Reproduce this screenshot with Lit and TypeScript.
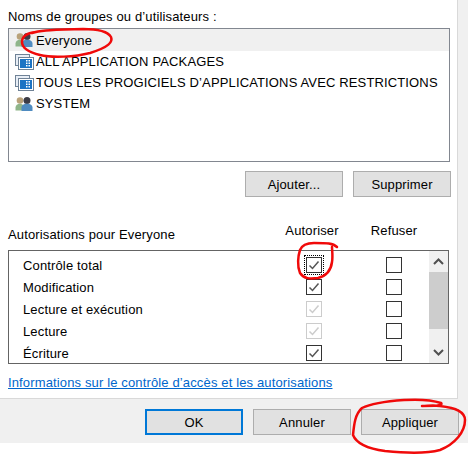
import { LitElement, html, css, svg } from "lit";
import { customElement } from "lit/decorators.js";

const userIcon = html`<svg class="ico" width="19" height="16" viewBox="0 0 19 16">
  <circle cx="5" cy="4.500" r="3.300" fill="#b9a27a"/><path d="M0.500 14.500v-3c0-2.500 2-3.800 4.500-3.800 2 0 3 1 4 2v4.800z" fill="#8fb58a"/>
  <circle cx="12" cy="4.500" r="3.500" fill="#3c3c46"/><path d="M6.500 15v-3.500c0-2.500 2.500-3.800 5.500-3.800s5.500 1.300 5.500 3.800V15z" fill="#4f8bc0"/>
</svg>`;
const appIcon = html`<svg class="ico" width="19" height="16" viewBox="0 0 19 16">
  <rect x="0.500" y="0.500" width="14" height="11" fill="#e8eef6" stroke="#6f8296"/>
  <rect x="3.500" y="3.500" width="15" height="12" fill="#fff" stroke="#6f8296"/>
  <rect x="5" y="5" width="12" height="9" fill="#1c74c4"/>
  <path d="M11 6h1.500v1.500H11zM13.500 6H15v1.500h-1.500zM11 8.500h1.500V10H11zM13.500 8.500H15V10h-1.500zM11 11h1.500v1.500H11zM13.500 11H15v1.500h-1.500z" fill="#fff"/>
</svg>`;

const users = [
  { name: "Everyone", icon: userIcon, sel: true },
  { name: "ALL APPLICATION PACKAGES", icon: appIcon },
  { name: "TOUS LES PROGICIELS D’APPLICATIONS AVEC RESTRICTIONS", icon: appIcon },
  { name: "SYSTEM", icon: userIcon },
];
const perms = [
  { name: "Contrôle total", state: "on", focus: true },
  { name: "Modification", state: "on" },
  { name: "Lecture et exécution", state: "dis" },
  { name: "Lecture", state: "dis" },
  { name: "Écriture", state: "on" },
];

const check = svg`<svg width="14" height="14" viewBox="0 0 14 14"><path d="M2.500 7.500 5.500 10.500 11.500 3.500" fill="none" stroke="currentColor" stroke-width="1.500"/></svg>`;

@customElement("app-root")
export class AppRoot extends LitElement {
  static styles = css`
    :host { display: block; position: relative; width: 468px; height: 454px; overflow: hidden; background: #fff;
      font-family: "Liberation Sans", Arial, sans-serif; font-size: 13px; letter-spacing: 0.14px; color: #000; }
    * { box-sizing: border-box; }
    .top { background: #f0f0f0; height: 443px; display: flex; flex-direction: column; }
    .panel { width: 458px; height: 399px; background: #fff; border-right: 1px solid #d9d9d9; border-bottom: 1px solid #d9d9d9;
      padding: 8px 0 0 8px; display: flex; flex-direction: column; }
    .lbl { height: 20px; line-height: 18px; }
    .list { width: 442px; height: 134px; border: 1px solid #828790; display: flex; flex-direction: column; flex: none; }
    .row { height: 21px; padding-left: 6px; display: flex; align-items: center; gap: 2px; white-space: nowrap; }
    .row.sel { height: 22px; background: #f0f0f0; }
    .ico { flex: none; }
    .actions { display: flex; gap: 10px; margin: 9px 0 0 237px; }
    .btn { width: 98px; height: 26px; background: #e1e1e1; border: 1px solid #adadad; display: flex; align-items: center; justify-content: center; }
    .btn.def { border: 2px solid #0078d7; }
    .head { display: grid; grid-template-columns: 263px 82px 82px; height: 28px; margin-top: 25px; }
    .head span { white-space: nowrap; }
    .head .a { padding-top: 4px; line-height: 18px; }
    .head .c { text-align: center; line-height: 18px; }
    .perm { width: 441px; height: 114px; border: 1px solid #646464; display: flex; flex: none; }
    .rows { flex: 1; padding-top: 3px; }
    .prow { height: 22px; display: grid; grid-template-columns: 299px 80px; align-items: center; padding-left: 14px; }
    .cell { display: flex; justify-content: flex-end; }
    .pname { grid-column: 1; grid-row: 1; white-space: nowrap; }
    .c1 { grid-column: 1; grid-row: 1; }
    .c2 { grid-column: 2; grid-row: 1; }
    .box { position: relative; width: 16px; height: 16px; border: 1px solid #333; display: flex; align-items: center; justify-content: center; color: #555; background: #fff; }
    .box.dis { border-color: #ccc; color: #ccc; }
    .box.focus::after { content: ""; position: absolute; inset: -3px; border: 1px dotted #000; }
    .sb { width: 19px; background: #f0f0f0; display: flex; flex-direction: column; }
    .sb .ar { height: 21px; display: flex; align-items: center; justify-content: center; flex: none; }
    .sb .th { height: 57px; background: #cdcdcd; flex: none; }
    .sb .sp { flex: 1; }
    .link { margin-top: 10px; color: #0066cc; text-decoration: underline; line-height: 18px; }
    .foot { display: flex; gap: 10px; padding: 10px 0 0 145px; }
    .scrib { position: absolute; left: 0; top: 0; pointer-events: none; }
  `;

  private box(state: string, focus = false) {
    const cls = "box" + (state === "dis" ? " dis" : "") + (focus ? " focus" : "");
    return html`<span class=${cls}>${state === "off" ? "" : check}</span>`;
  }

  render() {
    return html`
      <div class="top">
        <div class="panel">
          <div class="lbl">Noms de groupes ou d’utilisateurs :</div>
          <div class="list">
            ${users.map((u) => html`<div class="row ${u.sel ? "sel" : ""}">${u.icon}<span>${u.name}</span></div>`)}
          </div>
          <div class="actions">
            <div class="btn">Ajouter...</div>
            <div class="btn">Supprimer</div>
          </div>
          <div class="head">
            <span class="a">Autorisations pour Everyone</span>
            <span class="c">Autoriser</span>
            <span class="c">Refuser</span>
          </div>
          <div class="perm">
            <div class="rows">
              ${perms.map((p) => html`<div class="prow">
                <span class="pname">${p.name}</span>
                <span class="cell c1">${this.box(p.state, p.focus)}</span>
                <span class="cell c2">${this.box("off")}</span>
              </div>`)}
            </div>
            <div class="sb">
              <div class="ar"><svg width="11" height="7" viewBox="0 0 11 7"><path d="M1 6 5.500 1.500 10 6" fill="none" stroke="#505050" stroke-width="2"/></svg></div>
              <div class="th"></div>
              <div class="sp"></div>
              <div class="ar"><svg width="11" height="7" viewBox="0 0 11 7"><path d="M1 1 5.500 5.500 10 1" fill="none" stroke="#505050" stroke-width="2"/></svg></div>
            </div>
          </div>
          <div class="link">Informations sur le contrôle d’accès et les autorisations</div>
        </div>
        <div class="foot">
          <div class="btn def">OK</div>
          <div class="btn">Annuler</div>
          <div class="btn">Appliquer</div>
        </div>
      </div>
      <svg class="scrib" width="468" height="454" viewBox="0 0 468 454" fill="none" stroke="#f00a0a" stroke-width="2.500" stroke-linecap="round" stroke-linejoin="round">
        <path d="M32 33C40 30 50 30 83 29C95 29 107 30 111 37C113 42 109 47 90 53C75 57 52 58 40 55C28 52 22 47 22 42C22 36 27 33 36 32"/>
        <path d="M337 247C333 243 327 243 314 243C306 243 302 245 300 250C298 256 297 266 300 273C304 279 310 279 318 278C326 276 331 270 332 262C333 256 332 250 332 247"/>
        <path d="M422 406C432 406 444 406 441 403C432 400 420 399 404 400C390 401 372 403 362 408C355 414 354 425 353 435C357 445 370 449 385 451C405 453 425 454 440 450C455 444 465 432 465 420C465 412 457 408 440 406C432 405 428 406 422 406"/>
      </svg>
    `;
  }
}
